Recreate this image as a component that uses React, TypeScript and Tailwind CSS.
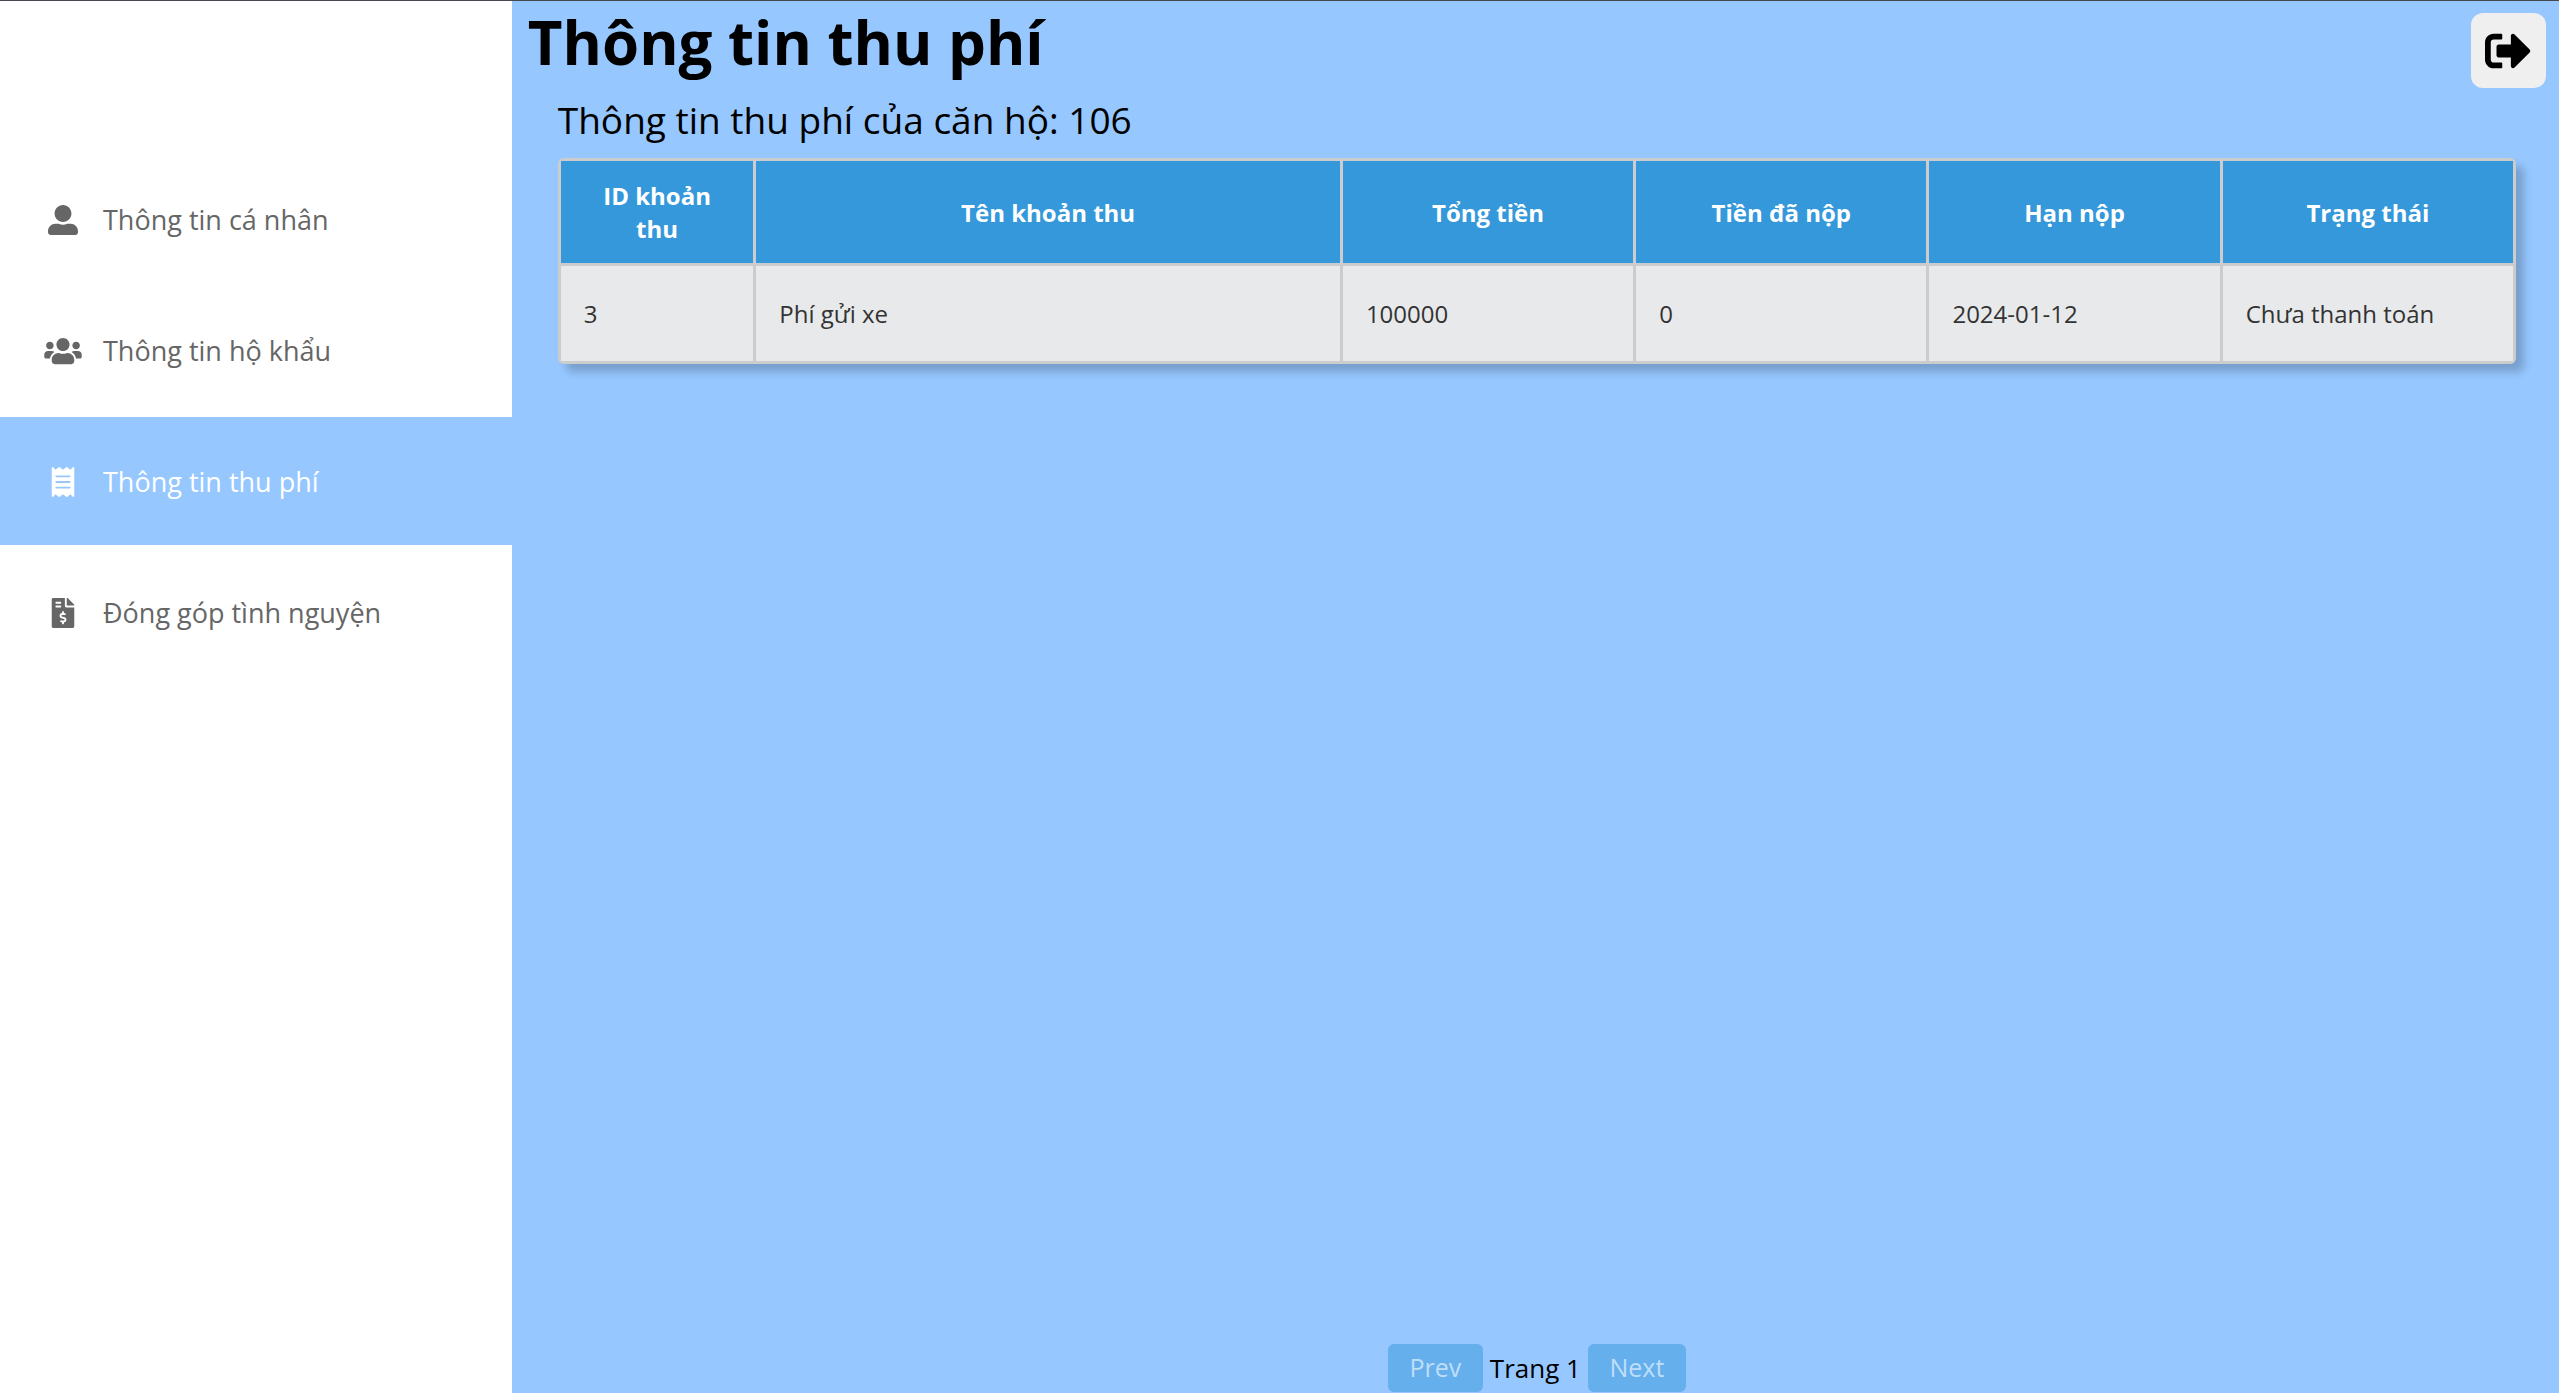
import { FaFileInvoiceDollar, FaReceipt, FaSignOutAlt, FaUserAlt, FaUsers } from "react-icons/fa";

const items = [
  { label: "Thông tin cá nhân", icon: FaUserAlt },
  { label: "Thông tin hộ khẩu", icon: FaUsers },
  { label: "Thông tin thu phí", icon: FaReceipt, active: true },
  { label: "Đóng góp tình nguyện", icon: FaFileInvoiceDollar },
];

const columns = [
  { label: "ID khoản thu", width: "w-[10%]" },
  { label: "Tên khoản thu", width: "w-[30%]" },
  { label: "Tổng tiền", width: "w-[15%]" },
  { label: "Tiền đã nộp", width: "w-[15%]" },
  { label: "Hạn nộp", width: "w-[15%]" },
  { label: "Trạng thái", width: "w-[15%]" },
];

const rows = [["3", "Phí gửi xe", "100000", "0", "2024-01-12", "Chưa thanh toán"]];

export default function App() {
  return (
    <div className="flex min-h-screen border-t border-[#45484f] bg-[#96c7ff] font-['Open_Sans',sans-serif] text-black">
      <nav className="w-1/5 shrink-0 bg-white pt-[154px]">
        <ul className="flex flex-col gap-[3px]">
          {items.map(({ label, icon: Icon, active }) => (
            <li key={label}>
              <a
                href="#"
                className={
                  active
                    ? "flex h-32 items-center gap-[21px] bg-[#96c7ff] pt-0.5 pl-11 text-[27px] text-white"
                    : "flex h-32 items-center gap-[21px] pt-0.5 pl-11 text-[27px] text-[#666666]"
                }
              >
                <Icon className="h-[30px] w-[38px]" />
                {label}
              </a>
            </li>
          ))}
        </ul>
      </nav>
      <main className="relative flex grow flex-col">
        <h1 className="pl-4 text-[60px] leading-[82px] font-bold">Thông tin thu phí</h1>
        <button
          type="button"
          aria-label="Đăng xuất"
          className="absolute top-3 right-[13px] flex size-[75px] items-center justify-center rounded-xl bg-[#efefef]"
        >
          <FaSignOutAlt className="size-[46px]" />
        </button>
        <div className="flex grow flex-col pr-[43px] pl-[46px]">
          <p className="mt-[7px] text-[37px] leading-[60px]">Thông tin thu phí của căn hộ: 106</p>
          <div className="mt-2 overflow-hidden rounded-md shadow-[8px_8px_8px_rgba(0,0,0,0.2)]">
            <table className="w-full table-fixed border-collapse text-2xl leading-[33px]">
              <thead>
                <tr className="h-[105px] bg-[#3498db] text-white">
                  {columns.map((c) => (
                    <th key={c.label} className={`${c.width} border-3 border-[#cccccc] px-6 font-bold`}>
                      {c.label}
                    </th>
                  ))}
                </tr>
              </thead>
              <tbody>
                {rows.map((row) => (
                  <tr key={row[0]} className="h-[98px] bg-[#e8e9eb] text-[#333333]">
                    {row.map((cell, i) => (
                      <td key={columns[i].label} className="border-3 border-[#cccccc] px-[23px]">
                        {cell}
                      </td>
                    ))}
                  </tr>
                ))}
              </tbody>
            </table>
          </div>
        </div>
        <div className="flex items-center justify-center gap-[7px] pb-px pl-[3px] text-[26px]">
          <button type="button" disabled className="h-12 w-[95px] rounded-md bg-[#65afed] text-[25px] text-[#bfdef9]">
            Prev
          </button>
          <span>Trang 1</span>
          <button type="button" disabled className="h-12 w-[98px] rounded-md bg-[#65afed] text-[25px] text-[#bfdef9]">
            Next
          </button>
        </div>
      </main>
    </div>
  );
}
